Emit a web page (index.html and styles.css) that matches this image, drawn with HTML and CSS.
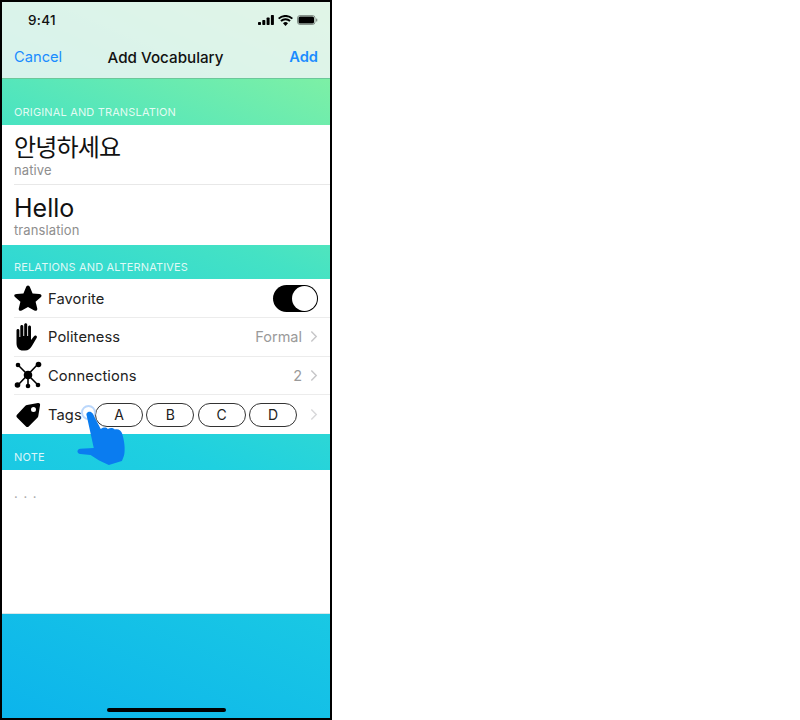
FILE: index.html
```html
<!DOCTYPE html>
<html>
<head>
<meta charset="utf-8">
<title>Add Vocabulary</title>
<link rel="stylesheet" href="styles.css">
</head>
<body>
<div class="phone">
  <!-- Status bar and navigation -->
  <div class="top">
    <div class="status">
      <span class="time">9:41</span>
      <div class="status-icons">
        <svg width="16" height="10" viewBox="0 0 16 10"><rect x="0" y="7" width="3" height="3" rx=".7"/><rect x="4.300" y="5" width="3" height="5" rx=".7"/><rect x="8.600" y="2.500" width="3" height="7.500" rx=".7"/><rect x="12.900" y="0" width="3" height="10" rx=".7"/></svg>
        <svg width="15" height="11" viewBox="0 0 15 11"><path d="M7.500 11 5 8.200a3.600 3.600 0 0 1 5 0zM3.600 6.800 2.300 5.300a7.700 7.700 0 0 1 10.400 0l-1.300 1.500a5.700 5.700 0 0 0-7.800 0zM1.300 4.300 0 2.900a11 11 0 0 1 15 0l-1.300 1.400a9.200 9.200 0 0 0-12.400 0z"/></svg>
        <svg width="21" height="10" viewBox="0 0 21 10"><rect x=".5" y=".5" width="17.500" height="9" rx="2.500" fill="none" stroke="#000" stroke-opacity=".4"/><rect x="1.500" y="1.500" width="15.500" height="7" rx="1.500"/><rect x="19" y="3.500" width="1.300" height="3" rx=".6" opacity=".4"/></svg>
      </div>
    </div>
    <div class="nav">
      <span class="nav-btn">Cancel</span>
      <span class="nav-title">Add Vocabulary</span>
      <span class="nav-btn nav-add">Add</span>
    </div>
  </div>

  <div class="section-head first">ORIGINAL AND TRANSLATION</div>
  <div class="group">
    <div class="field">
      <div class="big ko">안녕하세요</div>
      <div class="sub">native</div>
    </div>
    <div class="field last">
      <div class="big">Hello</div>
      <div class="sub">translation</div>
    </div>
  </div>

  <div class="section-head">RELATIONS AND ALTERNATIVES</div>
  <div class="group">
    <div class="row first">
      <svg class="icon" viewBox="0 0 28 28"><path d="M14 .5c1 0 1.700.9 2.100 1.900l2.500 6 6.700.6c2.300.2 2.900 2 1.400 3.300l-5.100 4.400 1.600 6.600c.5 2.100-1 3.200-2.900 2.100L14 22l-6.300 3.400c-1.900 1.100-3.400 0-2.900-2.100l1.600-6.600-5.100-4.400C-.2 11-.4 9.200 2.700 9l6.700-.6 2.500-6C12.300 1.400 13 .5 14 .5z"/></svg>
      <span class="label">Favorite</span>
      <div class="toggle"><div class="knob"></div></div>
    </div>
    <div class="row">
      <svg class="icon" viewBox="0 0 28 28"><path d="M2.500 7.500c0-2 2.900-2 2.900 0V14h.9V3.500c0-2 3-2 3 0V13h.9V1.800c0-2 3-2 3 0V13h.9V4c0-2 2.900-2 2.900 0v13l2.800-3.600c1.400-1.800 4-.5 2.800 1.600l-4.700 8c-1.500 2.600-3.600 4.500-6.900 4.500H9c-4 0-6.500-2.900-6.500-7.300z"/></svg>
      <span class="label">Politeness</span>
      <span class="value">Formal</span>
      <svg class="chev" viewBox="0 0 9 14"><path d="M1.500 1.500 7 7l-5.500 5.500"/></svg>
    </div>
    <div class="row">
      <svg class="icon" viewBox="0 0 28 28"><path d="M4 4l20 20M24 3 4 24M14 14v11" stroke="#000" stroke-width="1.600" fill="none"/><circle cx="14" cy="14" r="4.300"/><circle cx="4" cy="4" r="2.300"/><circle cx="24.500" cy="3.500" r="2.800"/><circle cx="3.500" cy="24" r="2.800"/><circle cx="24" cy="24" r="2.300"/><circle cx="14" cy="25" r="2.300"/></svg>
      <span class="label">Connections</span>
      <span class="value">2</span>
      <svg class="chev" viewBox="0 0 9 14"><path d="M1.500 1.500 7 7l-5.500 5.500"/></svg>
    </div>
    <div class="row last">
      <svg class="icon" viewBox="0 0 28 28"><path fill-rule="evenodd" d="M13 4 24 2c1.300-.2 2.300.8 2.100 2.100L24.300 15c-.1.700-.4 1.200-.9 1.700L14.700 25.500c-.8.800-1.900.8-2.700 0L3 16.400c-.8-.8-.8-1.900 0-2.700L11.400 4.800c.5-.5 1-.7 1.600-.8zM19.500 6a2.500 2.500 0 1 0 0 5 2.500 2.500 0 0 0 0-5z"/></svg>
      <span class="label">Tags</span>
      <div class="pills">
        <span class="pill">A</span>
        <span class="pill">B</span>
        <span class="pill">C</span>
        <span class="pill">D</span>
      </div>
      <svg class="chev light" viewBox="0 0 9 14"><path d="M1.500 1.500 7 7l-5.500 5.500"/></svg>
    </div>
  </div>

  <div class="section-head note-head">NOTE</div>
  <div class="note">. . .</div>
  <div class="bottom"><div class="home-bar"></div></div>

  <!-- Touch hint over the tags row -->
  <div class="tap-ring"></div>
  <svg class="hand" width="56" height="60" viewBox="0 0 52 60" preserveAspectRatio="none"><path d="M10 8c-1.500-3.500 3-6 5.500-2.500L23 21c3-2 5-1.800 6.500 0 2.500-1.500 5-1.500 6.500.5 3-1 6 .5 7 4.500 1.200 5 2.800 12 2 19-.4 3.400-1.600 6-2.500 8l-12 4-9-4.500-8-5.500-9.500-1c-3.500-.5-3.500-4.800 0-5.300l12.500-.7z"/></svg>
</div>
</body>
</html>
```

FILE: styles.css
```css
body {
  margin: 0;
  background: #fff;
  font-family: Inter, "Noto Sans CJK KR", sans-serif;
}

.phone {
  position: relative;
  width: 328px;
  height: 716px;
  border: 2px solid #000;
  display: flex;
  flex-direction: column;
  background: linear-gradient(204deg, #92f59a 0%, #44e2c4 33%, #1fd0e0 60%, #0cb4ec 100%);
}

/* Status bar and nav */
.top {
  height: 76px;
  background: rgba(238, 245, 245, 0.85);
  border-bottom: 1px solid #6cc79a;
}

.status {
  height: 36px;
  display: flex;
  align-items: center;
  justify-content: space-between;
  padding: 0 12px 0 26px;
}

.time {
  font-size: 13.500px;
  font-weight: 500;
  letter-spacing: 0.3px;
  color: #111;
}

.status-icons {
  display: flex;
  align-items: center;
  gap: 4px;
}

.nav {
  height: 38px;
  display: flex;
  align-items: center;
  justify-content: space-between;
  padding: 0 12px;
}

.nav-btn {
  font-size: 14.700px;
  color: #1a8cff;
  width: 60px;
}

.nav-add {
  font-weight: 600;
  text-align: right;
}

.nav-title {
  font-size: 15.200px;
  font-weight: 500;
  color: #111;
  margin-right: 1px;
}

/* Section headers */
.section-head {
  height: 34px;
  box-sizing: border-box;
  padding: 14px 12px 0;
  font-size: 11px;
  line-height: 16px;
  color: rgba(255, 255, 255, 0.85);
  letter-spacing: 0.15px;
}

.section-head.first {
  height: 46px;
  padding-top: 25px;
}

.section-head.note-head {
  height: 36px;
  padding-top: 15px;
}

.group {
  background: #fff;
  padding-left: 12px;
}

.field {
  height: 60px;
  box-sizing: border-box;
  border-bottom: 1px solid #e8e8e8;
  padding-top: 8px;
}

.field.last {
  border-bottom: 0;
}

.big {
  font-size: 25px;
  line-height: 31px;
  color: #111;
}

.big.ko {
  font-size: 24px;
  line-height: 29px;
  margin-bottom: 2px;
  letter-spacing: -0.8px;
}

.sub {
  font-size: 13px;
  line-height: 16px;
  letter-spacing: 0.1px;
  color: #8e8e8e;
  margin-top: -2px;
}

/* List rows */
.row {
  height: 38.750px;
  box-sizing: border-box;
  border-bottom: 1px solid #ececec;
  display: flex;
  align-items: center;
  padding-right: 12px;
}

.row.first {
  padding-top: 2px;
}

.row.last {
  border-bottom: 0;
}

.icon {
  width: 28px;
  height: 28px;
  margin-right: 6px;
  flex-shrink: 0;
}

.label {
  font-size: 14.700px;
  letter-spacing: 0.1px;
  color: #222;
  flex: 1;
  padding-top: 1px;
}

.value {
  font-size: 14.500px;
  color: #9a9a9a;
  margin-right: 8px;
}

.chev {
  width: 8px;
  height: 13px;
  fill: none;
  stroke: #c6c6c8;
  stroke-width: 1.600;
}

.chev.light {
  stroke: #d8d8da;
}

.toggle {
  width: 45px;
  height: 27px;
  border-radius: 14px;
  background: #000;
  display: flex;
  align-items: center;
  justify-content: flex-end;
  padding-right: 1px;
  box-sizing: border-box;
}

.knob {
  width: 25px;
  height: 25px;
  border-radius: 50%;
  background: #fff;
}

.pills {
  display: flex;
  gap: 3.300px;
  margin-right: 13px;
}

.pill {
  width: 48px;
  height: 24px;
  box-sizing: border-box;
  border: 1px solid #333;
  border-radius: 12px;
  font-size: 14px;
  line-height: 22px;
  text-align: center;
  color: #222;
}

.note {
  height: 144px;
  box-sizing: border-box;
  background: #fff;
  border-bottom: 1px solid #d8e8ea;
  padding: 12px 12px 0;
  font-size: 13px;
  line-height: 22px;
  letter-spacing: 1px;
  color: #aaa;
}

.bottom {
  flex: 1;
  display: flex;
  align-items: flex-end;
  justify-content: center;
  padding-bottom: 6px;
}

.home-bar {
  width: 119px;
  height: 4px;
  border-radius: 2px;
  background: #000;
}

/* Touch hint */
.tap-ring {
  position: absolute;
  left: 79px;
  top: 403px;
  width: 15px;
  height: 15px;
  box-sizing: border-box;
  border: 2px solid rgba(170, 205, 250, 0.8);
  border-radius: 50%;
}

.hand {
  position: absolute;
  left: 74px;
  top: 406px;
  fill: #0a7cf0;
}
```
